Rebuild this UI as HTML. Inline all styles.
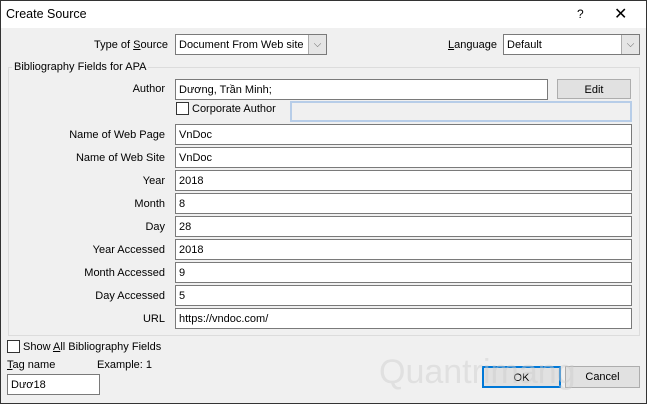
<!DOCTYPE html><html><head><style>
body{margin:0;width:647px;height:404px;overflow:hidden;font-family:"Liberation Sans",sans-serif;font-size:11px;color:#000}
#w{position:absolute;left:0;top:0;width:645px;height:402px;border:1px solid #333;background:#f0f0f0}
#t{position:absolute;left:0;top:0;width:645px;height:27px;background:#fff}
.a{position:absolute;white-space:nowrap}
.in{position:absolute;background:#fff;border:1px solid #7a7a7a;box-sizing:border-box;padding:4px 0 0 3px;height:21px;white-space:nowrap;overflow:hidden}
.l{position:absolute;right:481px;text-align:right}
.btn{position:absolute;background:#e1e1e1;border:1px solid #adadad;box-sizing:border-box;text-align:center;padding-top:4px}
.cb{position:absolute;width:13px;height:13px;border:1px solid #333;background:#fff;box-sizing:border-box}
.dd{position:absolute;right:0;top:0;width:17px;height:19px;background:#e5e5e5;border-left:1px solid #aaa;text-align:center;color:#666;font-size:10px;line-height:19px}
</style></head><body><div id="w">
<div id="t"></div>
<div class="a" style="left:5px;top:6px;font-size:12.5px">Create Source</div>
<div class="a" style="left:576px;top:6px;font-size:12px">?</div>
<div class="a" style="left:613px;top:3px;font-size:16px">✕</div>
<div class="a" style="left:93px;top:38px">Type of <u>S</u>ource</div>
<div class="in" style="left:174px;top:33px;width:152px"><span>Document From Web site</span><div class="dd">⌵</div></div>
<div class="a" style="left:447px;top:38px"><u>L</u>anguage</div>
<div class="in" style="left:502px;top:33px;width:137px">Default<div class="dd">⌵</div></div>
<div style="position:absolute;left:7px;top:66px;width:630px;height:267px;border:1px solid #dcdcdc"></div>
<div class="a" style="left:11px;top:60px;background:#f0f0f0;padding:0 2px">Bibliography Fields for APA</div>
<div class="l" style="top:82px">Author</div>
<div class="in" style="left:174px;top:78px;width:373px">Dương, Trần Minh;</div>
<div class="btn" style="left:556px;top:78px;width:74px;height:20px">Edit</div>
<div class="cb" style="left:175px;top:101px"></div>
<div class="a" style="left:191px;top:102px">Corporate Author</div>
<div class="in" style="left:289px;top:100px;width:342px;border:2px solid #b7cde8;background:#f0f0f0"></div>
<div class="l" style="top:128px">Name of Web Page</div><div class="in" style="left:174px;top:123px;width:457px">VnDoc</div>
<div class="l" style="top:151px">Name of Web Site</div><div class="in" style="left:174px;top:146px;width:457px">VnDoc</div>
<div class="l" style="top:174px">Year</div><div class="in" style="left:174px;top:169px;width:457px">2018</div>
<div class="l" style="top:197px">Month</div><div class="in" style="left:174px;top:192px;width:457px">8</div>
<div class="l" style="top:220px">Day</div><div class="in" style="left:174px;top:215px;width:457px">28</div>
<div class="l" style="top:243px">Year Accessed</div><div class="in" style="left:174px;top:238px;width:457px">2018</div>
<div class="l" style="top:266px">Month Accessed</div><div class="in" style="left:174px;top:261px;width:457px">9</div>
<div class="l" style="top:289px">Day Accessed</div><div class="in" style="left:174px;top:284px;width:457px">5</div>
<div class="l" style="top:312px">URL</div><div class="in" style="left:174px;top:307px;width:457px">https://vndoc.com/</div>
<div class="cb" style="left:6px;top:339px"></div>
<div class="a" style="left:22px;top:340px">Show <u>A</u>ll Bibliography Fields</div>
<div class="a" style="left:6px;top:358px"><u>T</u>ag name</div>
<div class="a" style="left:96px;top:358px">Example: 1</div>
<div class="in" style="left:6px;top:373px;width:93px">Dươ18</div>
<div class="btn" style="left:481px;top:365px;width:79px;height:22px;border:2px solid #0078d7">OK</div>
<div class="btn" style="left:564px;top:365px;width:75px;height:22px">Cancel</div>
<div class="a" style="left:378px;top:352px;font-size:34px;color:rgba(205,205,205,0.45)">Quantrimang</div>
</div></body></html>
